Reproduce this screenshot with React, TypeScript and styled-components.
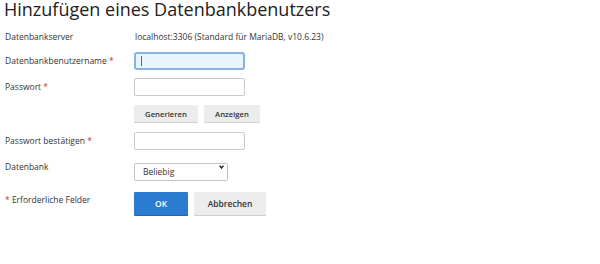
import React from "react";
import styled, { createGlobalStyle } from "styled-components";

const GlobalStyle = createGlobalStyle`
  html, body {
    margin: 0;
    padding: 0;
    background: #ffffff;
  }
  body {
    font-family: "Open Sans", "Liberation Sans", sans-serif;
    color: #333333;
    overflow: hidden;
  }
`;

const Page = styled.div`
  width: 600px;
  height: 264px;
  overflow: hidden;
`;

const Heading = styled.h1`
  margin: 0;
  padding-left: 4px;
  font-size: 18px;
  line-height: 18px;
  font-weight: 400;
  color: #222222;
  white-space: nowrap;
`;

const Form = styled.form`
  display: flex;
  flex-direction: column;
  padding-top: 10px;
`;

const Row = styled.div<{ $mt: number; $h: number; $align?: string }>`
  display: flex;
  align-items: ${(p) => p.$align ?? "center"};
  margin-top: ${(p) => p.$mt}px;
  min-height: ${(p) => p.$h}px;
`;

const Label = styled.div<{ $pt?: number }>`
  width: 134px;
  flex: none;
  padding-left: 5px;
  box-sizing: border-box;
  font-size: 8.5px;
  line-height: 12px;
  color: #333333;
  padding-top: ${(p) => p.$pt ?? 0}px;
`;

const Req = styled.span`
  color: #d0312d;
`;

const Value = styled.div`
  font-size: 8.5px;
  line-height: 12px;
  color: #333333;
  padding-left: 1px;
`;

const Control = styled.div`
  display: flex;
  align-items: center;
  gap: 6px;
`;

const TextInput = styled.input`
  box-sizing: border-box;
  width: 111px;
  height: 18px;
  margin: 0;
  padding: 0 4px;
  border: 1px solid #c9c9c9;
  border-radius: 2px;
  background: #ffffff;
  font-family: inherit;
  font-size: 8.5px;
  outline: none;
`;

const FocusedField = styled.div`
  box-sizing: border-box;
  width: 111px;
  height: 18px;
  display: flex;
  align-items: center;
  padding-left: 5px;
  border: 2px solid #86b3e3;
  border-radius: 3px;
  background: #eaf4ff;
`;

const Caret = styled.span`
  display: block;
  width: 1px;
  height: 10px;
  background: #666666;
`;

const SmallButton = styled.button<{ $w: number }>`
  box-sizing: border-box;
  width: ${(p) => p.$w}px;
  height: 18px;
  margin: 0;
  padding: 0;
  border: none;
  border-bottom: 1px solid #d2d2d2;
  border-radius: 1px;
  background: #ececec;
  color: #333333;
  font-family: inherit;
  font-size: 7.7px;
  font-weight: 600;
`;

const SelectWrap = styled.div`
  position: relative;
  width: 94px;
  height: 18px;
`;

const Select = styled.select`
  box-sizing: border-box;
  width: 100%;
  height: 100%;
  margin: 0;
  padding: 0 0 0 8px;
  border: 1px solid #c4c4c4;
  border-radius: 2px;
  background: #ffffff;
  color: #333333;
  font-family: inherit;
  font-size: 8.5px;
  appearance: none;
  -webkit-appearance: none;
  outline: none;
`;

const Chevron = styled.svg`
  position: absolute;
  right: 4px;
  top: 7px;
  width: 5px;
  height: 4px;
  pointer-events: none;
`;

const BigButton = styled.button<{ $w: number; $primary?: boolean }>`
  box-sizing: border-box;
  width: ${(p) => p.$w}px;
  height: 24px;
  margin: 0;
  padding: 0;
  border: none;
  border-bottom: 1px solid ${(p) => (p.$primary ? "#1f63ad" : "#cfcfcf")};
  border-radius: 1px;
  background: ${(p) => (p.$primary ? "#2b7bd0" : "#ececec")};
  color: ${(p) => (p.$primary ? "#ffffff" : "#333333")};
  font-family: inherit;
  font-size: 8.5px;
  font-weight: 600;
`;

export default function App() {
  return (
    <Page>
      <GlobalStyle />
      <Heading>Hinzufügen eines Datenbankbenutzers</Heading>
      <Form onSubmit={(e) => e.preventDefault()}>
        <Row $mt={0} $h={18}>
          <Label>Datenbankserver</Label>
          <Value>localhost:3306 (Standard für MariaDB, v10.6.23)</Value>
        </Row>
        <Row $mt={6} $h={18}>
          <Label>
            Datenbankbenutzername <Req>*</Req>
          </Label>
          <Control>
            <FocusedField>
              <Caret />
            </FocusedField>
          </Control>
        </Row>
        <Row $mt={8} $h={18}>
          <Label>
            Passwort <Req>*</Req>
          </Label>
          <Control>
            <TextInput type="password" />
          </Control>
        </Row>
        <Row $mt={9} $h={18}>
          <Label />
          <Control>
            <SmallButton type="button" $w={64}>
              Generieren
            </SmallButton>
            <SmallButton type="button" $w={56}>
              Anzeigen
            </SmallButton>
          </Control>
        </Row>
        <Row $mt={9} $h={18}>
          <Label>
            Passwort bestätigen <Req>*</Req>
          </Label>
          <Control>
            <TextInput type="password" />
          </Control>
        </Row>
        <Row $mt={8} $h={18}>
          <Label>Datenbank</Label>
          <Control>
            <SelectWrap>
              <Select defaultValue="any">
                <option value="any">Beliebig</option>
              </Select>
              <Chevron viewBox="0 0 5 4">
                <path d="M0.6 0.7 L2.5 3 L4.4 0.7" fill="none" stroke="#222" strokeWidth="1.4" />
              </Chevron>
            </SelectWrap>
          </Control>
        </Row>
        <Row $mt={16} $h={24} $align="flex-start">
          <Label $pt={2}>
            <Req>*</Req> Erforderliche Felder
          </Label>
          <Control>
            <BigButton type="submit" $w={54} $primary>
              OK
            </BigButton>
            <BigButton type="button" $w={72}>
              Abbrechen
            </BigButton>
          </Control>
        </Row>
      </Form>
    </Page>
  );
}
